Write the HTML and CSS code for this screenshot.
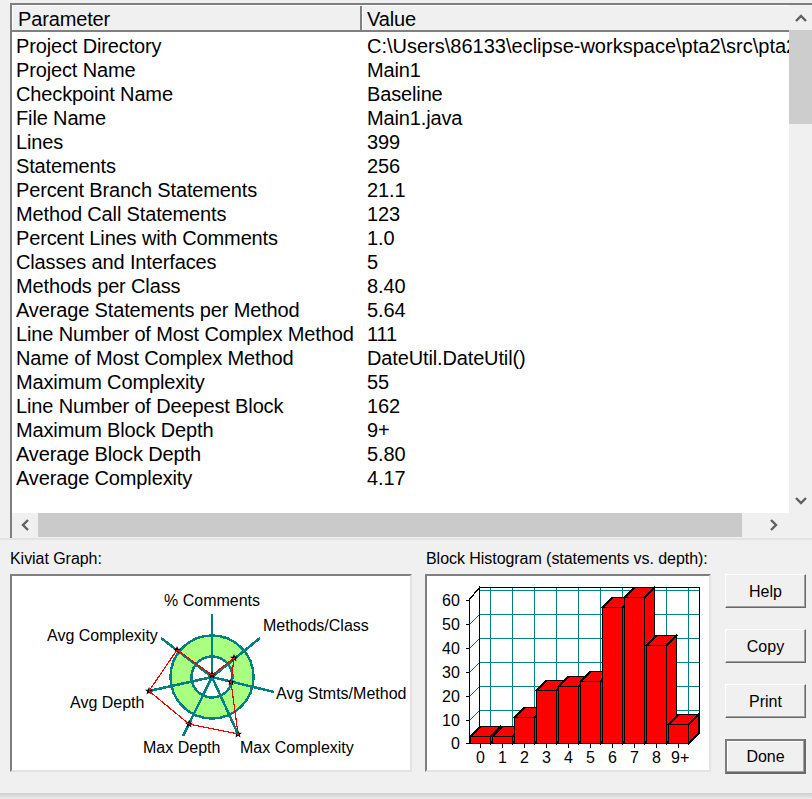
FILE: index.html
```html
<!DOCTYPE html>
<html lang="en">
<head>
<meta charset="utf-8">
<title>Kiviat Metrics</title>
<link rel="stylesheet" href="styles.css">
</head>
<body>
<div class="app">
  <div class="table-frame">
    <div class="table-main">
      <div class="table-view">
        <div class="table-head">
          <div class="head-cell head-param">Parameter</div>
          <div class="head-cell head-value">Value</div>
        </div>
        <div class="table-body">
          <div class="row"><span>Project Directory</span><span class="path">C:\Users\86133\eclipse-workspace\pta2\src\pta2\Main1</span></div>
          <div class="row"><span>Project Name</span><span>Main1</span></div>
          <div class="row"><span>Checkpoint Name</span><span>Baseline</span></div>
          <div class="row"><span>File Name</span><span>Main1.java</span></div>
          <div class="row"><span>Lines</span><span>399</span></div>
          <div class="row"><span>Statements</span><span>256</span></div>
          <div class="row"><span>Percent Branch Statements</span><span>21.1</span></div>
          <div class="row"><span>Method Call Statements</span><span>123</span></div>
          <div class="row"><span>Percent Lines with Comments</span><span>1.0</span></div>
          <div class="row"><span>Classes and Interfaces</span><span>5</span></div>
          <div class="row"><span>Methods per Class</span><span>8.40</span></div>
          <div class="row"><span>Average Statements per Method</span><span>5.64</span></div>
          <div class="row"><span>Line Number of Most Complex Method</span><span>111</span></div>
          <div class="row"><span>Name of Most Complex Method</span><span>DateUtil.DateUtil()</span></div>
          <div class="row"><span>Maximum Complexity</span><span>55</span></div>
          <div class="row"><span>Line Number of Deepest Block</span><span>162</span></div>
          <div class="row"><span>Maximum Block Depth</span><span>9+</span></div>
          <div class="row"><span>Average Block Depth</span><span>5.80</span></div>
          <div class="row"><span>Average Complexity</span><span>4.17</span></div>
        </div>
      </div>
      <div class="vscroll">
        <div class="sb-btn sb-btn-v"><svg class="chev" viewBox="0 0 12 12"><path d="M1 9 L6 4 L11 9"/></svg></div>
        <div class="sb-thumb-v"></div>
        <div class="sb-track-v"></div>
        <div class="sb-btn sb-btn-v"><svg class="chev" viewBox="0 0 12 12"><path d="M1 3 L6 8 L11 3"/></svg></div>
      </div>
    </div>
    <div class="hscroll">
      <div class="sb-btn sb-btn-h"><svg class="chev" viewBox="0 0 12 12"><path d="M9 1 L4 6 L9 11"/></svg></div>
      <div class="sb-thumb-h"></div>
      <div class="sb-btn sb-btn-h sb-btn-right"><svg class="chev" viewBox="0 0 12 12"><path d="M3 1 L8 6 L3 11"/></svg></div>
    </div>
  </div>

  <div class="lower">
    <section class="chart chart-kiviat">
      <h2 class="chart-title">Kiviat Graph:</h2>
      <div class="sunken">
        <svg class="chart-svg" viewBox="12 576 398 194" width="398" height="194">
          <defs>
            <path id="star" d="M0 -4L1.200 -1.200L4 -1.200L1.800 0.600L2.500 3.500L0 1.800L-2.500 3.500L-1.800 0.600L-4 -1.200L-1.200 -1.200Z"/>
          </defs>
          <path class="ring" fill-rule="evenodd" d="M170.500 677a41.500 41.500 0 1 0 83 0a41.500 41.500 0 1 0 -83 0zM191.500 677a20.500 20.500 0 1 0 41 0a20.500 20.500 0 1 0 -41 0z"/>
          <g class="spokes">
            <line x1="212" y1="677" x2="212" y2="614"/>
            <line x1="212" y1="677" x2="260" y2="638"/>
            <line x1="212" y1="677" x2="274" y2="692"/>
            <line x1="212" y1="677" x2="238" y2="734"/>
            <line x1="212" y1="677" x2="183" y2="736"/>
            <line x1="212" y1="677" x2="149" y2="691"/>
            <line x1="212" y1="677" x2="161" y2="638"/>
          </g>
          <g class="marks">
            <use href="#star" x="212" y="675"/><use href="#star" x="234" y="658"/><use href="#star" x="231" y="682"/>
            <use href="#star" x="238" y="734"/><use href="#star" x="189" y="724"/><use href="#star" x="149" y="691"/><use href="#star" x="177" y="650"/>
          </g>
          <polygon class="poly" points="212,675 234,658 231,682 238,734 189,724 149,691 177,650"/>
          <g class="svg-text">
            <text x="164" y="606">% Comments</text>
            <text x="263" y="631">Methods/Class</text>
            <text x="276" y="699">Avg Stmts/Method</text>
            <text x="240" y="753">Max Complexity</text>
            <text x="143" y="753">Max Depth</text>
            <text x="70" y="708">Avg Depth</text>
            <text x="47" y="641">Avg Complexity</text>
          </g>
        </svg>
      </div>
    </section>

    <section class="chart chart-hist">
      <h2 class="chart-title">Block Histogram (statements vs. depth):</h2>
      <div class="sunken">
        <svg class="chart-svg" viewBox="427 576 282 194" width="282" height="194">
          <g class="grid">
            <path d="M479.500 590.500H699.500M479.500 614.500H699.500M479.500 638.500H699.500M479.500 662.500H699.500M479.500 686.500H699.500M479.500 710.500H699.500"/>
            <path d="M490.500 587.500V734M512.500 587.500V734M534.500 587.500V734M556.500 587.500V734M578.500 587.500V734M600.500 587.500V734M622.500 587.500V734M644.500 587.500V734M666.500 587.500V734M688.500 587.500V734"/>
            <path d="M469.500 624.500L479.500 614.500M469.500 648.500L479.500 638.500M469.500 672.500L479.500 662.500M469.500 696.500L479.500 686.500M469.500 720.500L479.500 710.500"/>
          </g>
          <g class="axes">
            <path d="M479.500 587.500H699.500V733.500L689.500 743.500H469.500V599.500L479.500 587.500V733.500"/>
            <path d="M465.500 600.500H469.500M465.500 624.500H469.500M465.500 648.500H469.500M465.500 672.500H469.500M465.500 696.500H469.500M465.500 720.500H469.500M465.500 743.500H469.500"/>
            <path d="M480.500 743.500V748M502.500 743.500V748M524.500 743.500V748M546.500 743.500V748M568.500 743.500V748M590.500 743.500V748M612.500 743.500V748M634.500 743.500V748M656.500 743.500V748M678.500 743.500V748"/>
          </g>
          <g class="bars">
            <path d="M470.500 736.500l10 -10h20l-10 10z"/><path d="M490.500 736.500l10 -10v7l-10 10z"/><rect x="470.500" y="736.500" width="20" height="7"/>
            <path d="M492.500 736.500l10 -10h20l-10 10z"/><path d="M512.500 736.500l10 -10v7l-10 10z"/><rect x="492.500" y="736.500" width="20" height="7"/>
            <path d="M514.500 717.500l10 -10h20l-10 10z"/><path d="M534.500 717.500l10 -10v26l-10 10z"/><rect x="514.500" y="717.500" width="20" height="26"/>
            <path d="M536.500 690.500l10 -10h20l-10 10z"/><path d="M556.500 690.500l10 -10v53l-10 10z"/><rect x="536.500" y="690.500" width="20" height="53"/>
            <path d="M558.500 686.500l10 -10h20l-10 10z"/><path d="M578.500 686.500l10 -10v57l-10 10z"/><rect x="558.500" y="686.500" width="20" height="57"/>
            <path d="M580.500 681.500l10 -10h20l-10 10z"/><path d="M600.500 681.500l10 -10v62l-10 10z"/><rect x="580.500" y="681.500" width="20" height="62"/>
            <path d="M602.500 607.500l10 -10h20l-10 10z"/><path d="M622.500 607.500l10 -10v136l-10 10z"/><rect x="602.500" y="607.500" width="20" height="136"/>
            <path d="M624.500 597.500l10 -10h20l-10 10z"/><path d="M644.500 597.500l10 -10v146l-10 10z"/><rect x="624.500" y="597.500" width="20" height="146"/>
            <path d="M646.500 645.500l10 -10h20l-10 10z"/><path d="M666.500 645.500l10 -10v98l-10 10z"/><rect x="646.500" y="645.500" width="20" height="98"/>
            <path d="M668.500 724.500l10 -10h20l-10 10z"/><path d="M688.500 724.500l10 -10v19l-10 10z"/><rect x="668.500" y="724.500" width="20" height="19"/>
          </g>
          <g class="svg-text">
            <text x="442" y="606">60</text><text x="442" y="630">50</text><text x="442" y="654">40</text>
            <text x="442" y="678">30</text><text x="442" y="702">20</text><text x="442" y="726">10</text>
            <text x="451" y="749">0</text>
            <text x="476" y="763">0</text><text x="498" y="763">1</text><text x="520" y="763">2</text><text x="542" y="763">3</text>
            <text x="564" y="763">4</text><text x="586" y="763">5</text><text x="608" y="763">6</text><text x="630" y="763">7</text>
            <text x="652" y="763">8</text><text x="671" y="763">9+</text>
          </g>
        </svg>
      </div>
    </section>

    <div class="actions">
      <button class="btn">Help</button>
      <button class="btn">Copy</button>
      <button class="btn">Print</button>
      <button class="btn btn-default">Done</button>
    </div>
  </div>
  <div class="window-edge"></div>
</div>
</body>
</html>
```
FILE: styles.css
```css
* { box-sizing: border-box; }
html, body { margin: 0; padding: 0; }
body {
  width: 812px;
  height: 799px;
  overflow: hidden;
  background: #f0f0f0;
  font-family: "Liberation Sans", Arial, sans-serif;
  color: #000;
}
.app {
  display: flex;
  flex-direction: column;
  height: 799px;
  padding-top: 3px;
}
.table-frame {
  margin-left: 10px;
  height: 535px;
  border-top: 2px solid #7f7f7f;
  border-left: 2px solid #7f7f7f;
  display: flex;
  flex-direction: column;
  flex: none;
}
.table-main { display: flex; height: 508px; }
.table-view { width: 777px; background: #fff; overflow: hidden; }
.table-head {
  display: flex;
  height: 27px;
  background: #f0f0f0;
  border-top: 1px solid #fff;
  border-bottom: 2px solid #7f7f7f;
  font-size: 20px;
  line-height: 26px;
  letter-spacing: -0.14px;
}
.head-cell { white-space: nowrap; border-left: 1px solid #fff; }
.head-param { width: 350px; padding-left: 5px; border-right: 2px solid #7f7f7f; }
.head-value { flex: 1; padding-left: 4px; }
.table-body { padding-top: 2px; font-size: 20px; line-height: 24px; letter-spacing: -0.14px; }
.row {
  display: grid;
  grid-template-columns: 351px 1fr;
  height: 24px;
  padding-left: 4px;
  white-space: nowrap;
}
.row span { overflow: hidden; }
.row .path { letter-spacing: 0; }
.vscroll {
  width: 23px;
  display: flex;
  flex-direction: column;
  background: #f0f0f0;
}
.sb-btn { display: flex; align-items: center; justify-content: center; background: #f0f0f0; flex: none; }
.sb-btn-v { height: 25px; }
.sb-thumb-v { height: 94px; background: #cdcdcd; flex: none; }
.sb-track-v { flex: 1; }
.hscroll { display: flex; height: 24px; background: #f0f0f0; }
.sb-btn-h { width: 26px; }
.sb-thumb-h { width: 704px; background: #cacaca; }
.sb-btn-right { margin-left: auto; width: 70px; justify-content: flex-start; padding-left: 26px; }
.chev { width: 12px; height: 12px; }
.chev path { fill: none; stroke: #606060; stroke-width: 2.4; }

.lower {
  flex: 1;
  display: flex;
  padding: 9px 6px 0 10px;
  border-top: 2px solid #e3e3e3;
}
.chart-title {
  margin: 0;
  height: 25px;
  font-size: 16px;
  font-weight: 400;
  line-height: 19px;
  letter-spacing: -0.05px;
  white-space: nowrap;
}
.chart-kiviat { width: 402px; margin-right: 13px; }
.chart-hist { width: 286px; margin-right: 14px; }
.chart-hist .chart-title { padding-left: 1px; }
.sunken {
  background: #fff;
  border-top: 2px solid #7f7f7f;
  border-left: 2px solid #7f7f7f;
  border-right: 2px solid #e3e3e3;
  border-bottom: 2px solid #e3e3e3;
  height: 198px;
}
.chart-svg { display: block; }
.spokes line { stroke: #008080; stroke-width: 2.500; shape-rendering: crispEdges; }
.ring { fill: #a9ff80; stroke: #008080; stroke-width: 2.500; shape-rendering: crispEdges; }
.poly { fill: none; stroke: #f00000; stroke-width: 1.200; shape-rendering: crispEdges; }
.marks use { fill: #000; }
.svg-text text { font-family: "Liberation Sans", Arial, sans-serif; font-size: 16px; fill: #000; }
.grid path { stroke: #008080; stroke-width: 1; fill: none; shape-rendering: crispEdges; }
.axes path { stroke: #000; stroke-width: 1.300; fill: none; shape-rendering: crispEdges; }
.bars path, .bars rect { fill: #ff0000; stroke: #000; stroke-width: 1.500; shape-rendering: crispEdges; }
.actions {
  flex: none;
  width: 81px;
  display: flex;
  flex-direction: column;
  gap: 21px;
  padding-top: 25px;
}
.btn {
  height: 34px;
  padding: 2px 0 0;
  background: #f0f0f0;
  border: 1px solid;
  border-color: #fff #696969 #696969 #fff;
  box-shadow: inset -1px -1px 0 #a0a0a0;
  font-family: "Liberation Sans", Arial, sans-serif;
  font-size: 16px;
  color: #000;
}
.btn-default {
  height: 35px;
  padding: 0;
  border: 2px solid #696969;
  border-top-color: #7d7d7d;
  border-left-color: #7d7d7d;
  box-shadow: inset -1px -1px 0 #a0a0a0, inset 1px 1px 0 #fff;
}
.window-edge {
  height: 6px;
  flex: none;
  background: linear-gradient(#cfcfcf, #ebebeb);
}
```
